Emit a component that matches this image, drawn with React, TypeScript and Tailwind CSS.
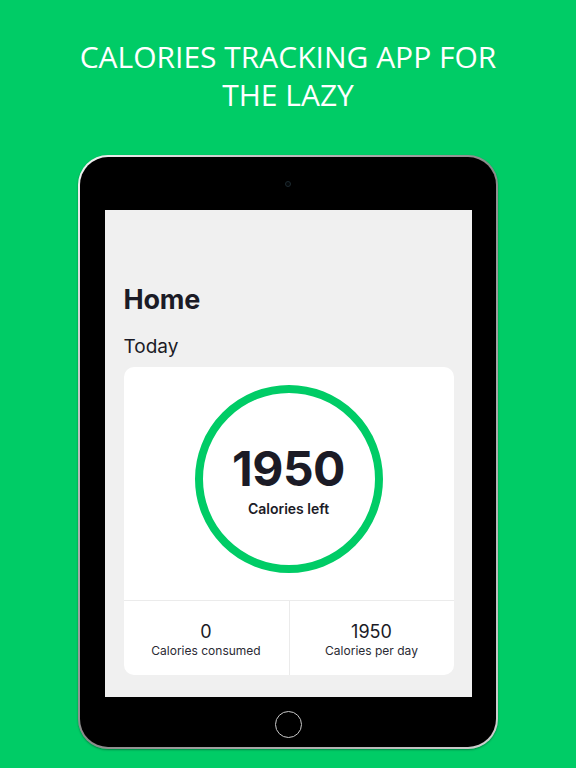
export default function App() {
  return (
    <div className="flex h-[768px] w-[576px] flex-col items-center overflow-hidden bg-[#00cc66]">
      <h1
        className="mt-[38px] w-[440px] text-center text-[30px] leading-[38px] font-normal text-white"
        style={{ fontFamily: '"Open Sans", "Liberation Sans", sans-serif' }}
      >
        CALORIES TRACKING APP FOR THE LAZY
      </h1>
      <Tablet />
    </div>
  );
}

function Tablet() {
  return (
    <div className="mt-[41px] h-[594px] w-[420px] rounded-[30px] bg-gradient-to-br from-[#f2f2f2] via-[#8a8a8a] to-[#cfcfcf] p-[2px] shadow-[0_1px_2px_rgba(0,0,0,0.35)]">
      <div className="flex h-full w-full flex-col items-center rounded-[28px] bg-black">
        <div className="flex h-[53px] items-center justify-center">
          <div className="h-[6px] w-[6px] rounded-full border border-[#1d2a30] bg-[#05080a]" />
        </div>
        <Screen />
        <div className="flex flex-1 items-center justify-center pt-[4px]">
          <div className="h-[27px] w-[27px] rounded-full border-[1.5px] border-[#c9c9c9]" />
        </div>
      </div>
    </div>
  );
}

function Screen() {
  return (
    <div
      className="h-[487px] w-[367px] bg-[#f0f0f0] px-[19px] pt-[74px] text-[#1b1b26]"
      style={{ fontFamily: 'Inter, "Liberation Sans", sans-serif' }}
    >
      <h2 className="text-[27px] leading-[32px] font-bold tracking-[-0.2px]">Home</h2>
      <p className="mt-[19px] text-[19px] leading-[24px]">Today</p>
      <div className="mt-[8px] w-[330px] rounded-[10px] bg-white">
        <div className="flex justify-center pt-[18px] pb-[27px]">
          <Ring />
        </div>
        <div className="grid h-[75px] grid-cols-2 border-t border-[#ebebeb]">
          <Stat value="0" label="Calories consumed" />
          <Stat value="1950" label="Calories per day" divider />
        </div>
      </div>
    </div>
  );
}

function Ring() {
  return (
    <div className="flex h-[188px] w-[188px] flex-col items-center justify-center rounded-full border-[8px] border-[#00cc66]">
      <span className="mt-[3px] text-[48px] leading-[52px] font-bold tracking-[-0.5px]">1950</span>
      <span className="mt-[5px] text-[14px] leading-[18px] font-semibold">Calories left</span>
    </div>
  );
}

function Stat({ value, label, divider }: { value: string; label: string; divider?: boolean }) {
  return (
    <div className={`flex flex-col items-center pt-[20px] ${divider ? "border-l border-[#ebebeb]" : ""}`}>
      <span className="text-[18px] leading-[22px]">{value}</span>
      <span className="text-[12px] leading-[16px] text-[#2a2a33]">{label}</span>
    </div>
  );
}
